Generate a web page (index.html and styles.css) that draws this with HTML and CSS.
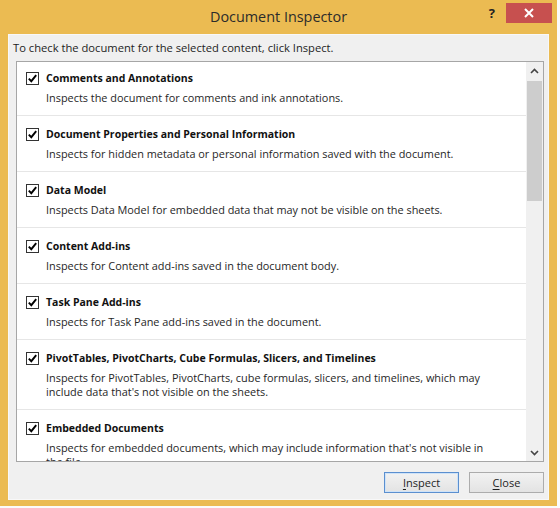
FILE: index.html
```html
<!DOCTYPE html>
<html lang="en">
<head>
<meta charset="utf-8">
<title>Document Inspector</title>
<link rel="stylesheet" href="styles.css">
</head>
<body>
<div class="window">
  <div class="titlebar">
    <div class="spacer"></div>
    <div class="title">Document Inspector</div>
    <div class="controls">
      <span class="help">?</span>
      <span class="close"><svg width="10" height="10" viewBox="0 0 10 10"><path d="M1 1 L9 9 M9 1 L1 9" stroke="#fff" stroke-width="2" fill="none"/></svg></span>
    </div>
  </div>
  <div class="client">
    <p class="intro">To check the document for the selected content, click Inspect.</p>
    <div class="list">
      <div class="items">
        <div class="item first">
          <span class="check"><svg width="11" height="11" viewBox="0 0 11 11"><path d="M1.8 5.6 L4.3 8.2 L9.2 2.2" stroke="#000" stroke-width="1.9" fill="none"/></svg></span>
          <div class="text"><div class="name">Comments and Annotations</div><div class="desc">Inspects the document for comments and ink annotations.</div></div>
        </div>
        <div class="item">
          <span class="check"><svg width="11" height="11" viewBox="0 0 11 11"><path d="M1.8 5.6 L4.3 8.2 L9.2 2.2" stroke="#000" stroke-width="1.9" fill="none"/></svg></span>
          <div class="text"><div class="name">Document Properties and Personal Information</div><div class="desc">Inspects for hidden metadata or personal information saved with the document.</div></div>
        </div>
        <div class="item">
          <span class="check"><svg width="11" height="11" viewBox="0 0 11 11"><path d="M1.8 5.6 L4.3 8.2 L9.2 2.2" stroke="#000" stroke-width="1.9" fill="none"/></svg></span>
          <div class="text"><div class="name">Data Model</div><div class="desc">Inspects Data Model for embedded data that may not be visible on the sheets.</div></div>
        </div>
        <div class="item">
          <span class="check"><svg width="11" height="11" viewBox="0 0 11 11"><path d="M1.8 5.6 L4.3 8.2 L9.2 2.2" stroke="#000" stroke-width="1.9" fill="none"/></svg></span>
          <div class="text"><div class="name">Content Add-ins</div><div class="desc">Inspects for Content add-ins saved in the document body.</div></div>
        </div>
        <div class="item">
          <span class="check"><svg width="11" height="11" viewBox="0 0 11 11"><path d="M1.8 5.6 L4.3 8.2 L9.2 2.2" stroke="#000" stroke-width="1.9" fill="none"/></svg></span>
          <div class="text"><div class="name">Task Pane Add-ins</div><div class="desc">Inspects for Task Pane add-ins saved in the document.</div></div>
        </div>
        <div class="item">
          <span class="check"><svg width="11" height="11" viewBox="0 0 11 11"><path d="M1.8 5.6 L4.3 8.2 L9.2 2.2" stroke="#000" stroke-width="1.9" fill="none"/></svg></span>
          <div class="text"><div class="name">PivotTables, PivotCharts, Cube Formulas, Slicers, and Timelines</div><div class="desc">Inspects for PivotTables, PivotCharts, cube formulas, slicers, and timelines, which may<br>include data that's not visible on the sheets.</div></div>
        </div>
        <div class="item">
          <span class="check"><svg width="11" height="11" viewBox="0 0 11 11"><path d="M1.8 5.6 L4.3 8.2 L9.2 2.2" stroke="#000" stroke-width="1.9" fill="none"/></svg></span>
          <div class="text"><div class="name">Embedded Documents</div><div class="desc">Inspects for embedded documents, which may include information that's not visible in<br>the file.</div></div>
        </div>
      </div>
      <div class="scrollbar">
        <div class="arrow"><svg width="9" height="6" viewBox="0 0 9 6"><path d="M1 5 L4.5 1.5 L8 5" stroke="#444" stroke-width="1.6" fill="none"/></svg></div>
        <div class="track"><div class="thumb"></div></div>
        <div class="arrow"><svg width="9" height="6" viewBox="0 0 9 6"><path d="M1 1 L4.5 4.5 L8 1" stroke="#444" stroke-width="1.6" fill="none"/></svg></div>
      </div>
    </div>
    <div class="buttons">
      <button class="btn default"><u>I</u>nspect</button>
      <button class="btn"><u>C</u>lose</button>
    </div>
  </div>
</div>
</body>
</html>
```
FILE: styles.css
```css
html, body {
  margin: 0;
  padding: 0;
  background: #fbfbfb;
}

body {
  font-family: "Open Sans", "Noto Sans", sans-serif;
  width: 560px;
  height: 508px;
  overflow: hidden;
}

.window {
  width: 557px;
  height: 506px;
  box-sizing: border-box;
  background: #ebbb52;
  padding: 0 8px 6px 8px;
  display: flex;
  flex-direction: column;
}

.titlebar {
  height: 34px;
  margin: 0 -8px;
  display: grid;
  grid-template-columns: 1fr auto 1fr;
  align-items: start;
}

.title {
  font-size: 14.4px;
  color: #2b2b2b;
  line-height: 20px;
  padding-top: 7px;
}

.controls {
  display: flex;
  justify-content: flex-end;
  align-items: flex-start;
}

.help {
  font-size: 13px;
  font-weight: 700;
  color: #222;
  line-height: 16px;
  margin-top: 5px;
  margin-right: 11px;
}

.close {
  width: 46px;
  height: 20px;
  margin-top: 3px;
  margin-right: 5px;
  background: #c7504f;
  display: flex;
  align-items: center;
  justify-content: center;
}

.client {
  flex: 1;
  background: #f0f0f0;
  border: 1px solid #f8f8f8;
  display: flex;
  flex-direction: column;
}

.intro {
  margin: 0;
  padding: 5px 0 0 4px;
  font-size: 11.2px;
  line-height: 15px;
  color: #1e1e1e;
}

.list {
  margin: 6px 0 0 7px;
  width: 528px;
  height: 401px;
  box-sizing: border-box;
  border: 1px solid #a6a6a6;
  background: #fff;
  display: flex;
}

.items {
  flex: 1;
  overflow: hidden;
}

.item {
  display: flex;
  align-items: flex-start;
  padding: 10px 0 10px 9px;
  border-top: 1px solid #e6e6e6;
}

.item.first {
  padding-top: 8px;
  border-top: none;
}

.check {
  width: 13px;
  height: 13px;
  box-sizing: border-box;
  border: 1px solid #333;
  background: #fff;
  margin-top: 2px;
  margin-right: 7px;
  display: flex;
  align-items: center;
  justify-content: center;
  flex: none;
}

.name {
  font-size: 10.5px;
  font-weight: 700;
  line-height: 16px;
  color: #111;
}

.desc {
  margin-top: 5px;
  font-size: 10.9px;
  line-height: 14px;
  color: #262626;
  white-space: nowrap;
}

.scrollbar {
  width: 17px;
  background: #f0f0f0;
  display: flex;
  flex-direction: column;
}

.arrow {
  height: 17px;
  display: flex;
  align-items: center;
  justify-content: center;
  flex: none;
}

.track {
  flex: 1;
  padding: 2px 1px 0 1px;
}

.thumb {
  height: 120px;
  background: #cdcdcd;
}

.buttons {
  display: flex;
  justify-content: flex-end;
  gap: 10px;
  padding: 10px 4px 0 0;
}

.btn {
  width: 75px;
  height: 21px;
  box-sizing: border-box;
  font-family: "Open Sans", "Noto Sans", sans-serif;
  font-size: 11px;
  color: #1e1e1e;
  background: linear-gradient(#f2f2f2, #e3e3e3);
  border: 1px solid #acacac;
  padding: 0;
  line-height: 17px;
}

.btn.default {
  border-color: #5b8fcf;
  box-shadow: inset 0 0 0 1px #cfe3f8;
}

.btn u {
  text-decoration-thickness: 1px;
  text-underline-offset: 2px;
}
```
